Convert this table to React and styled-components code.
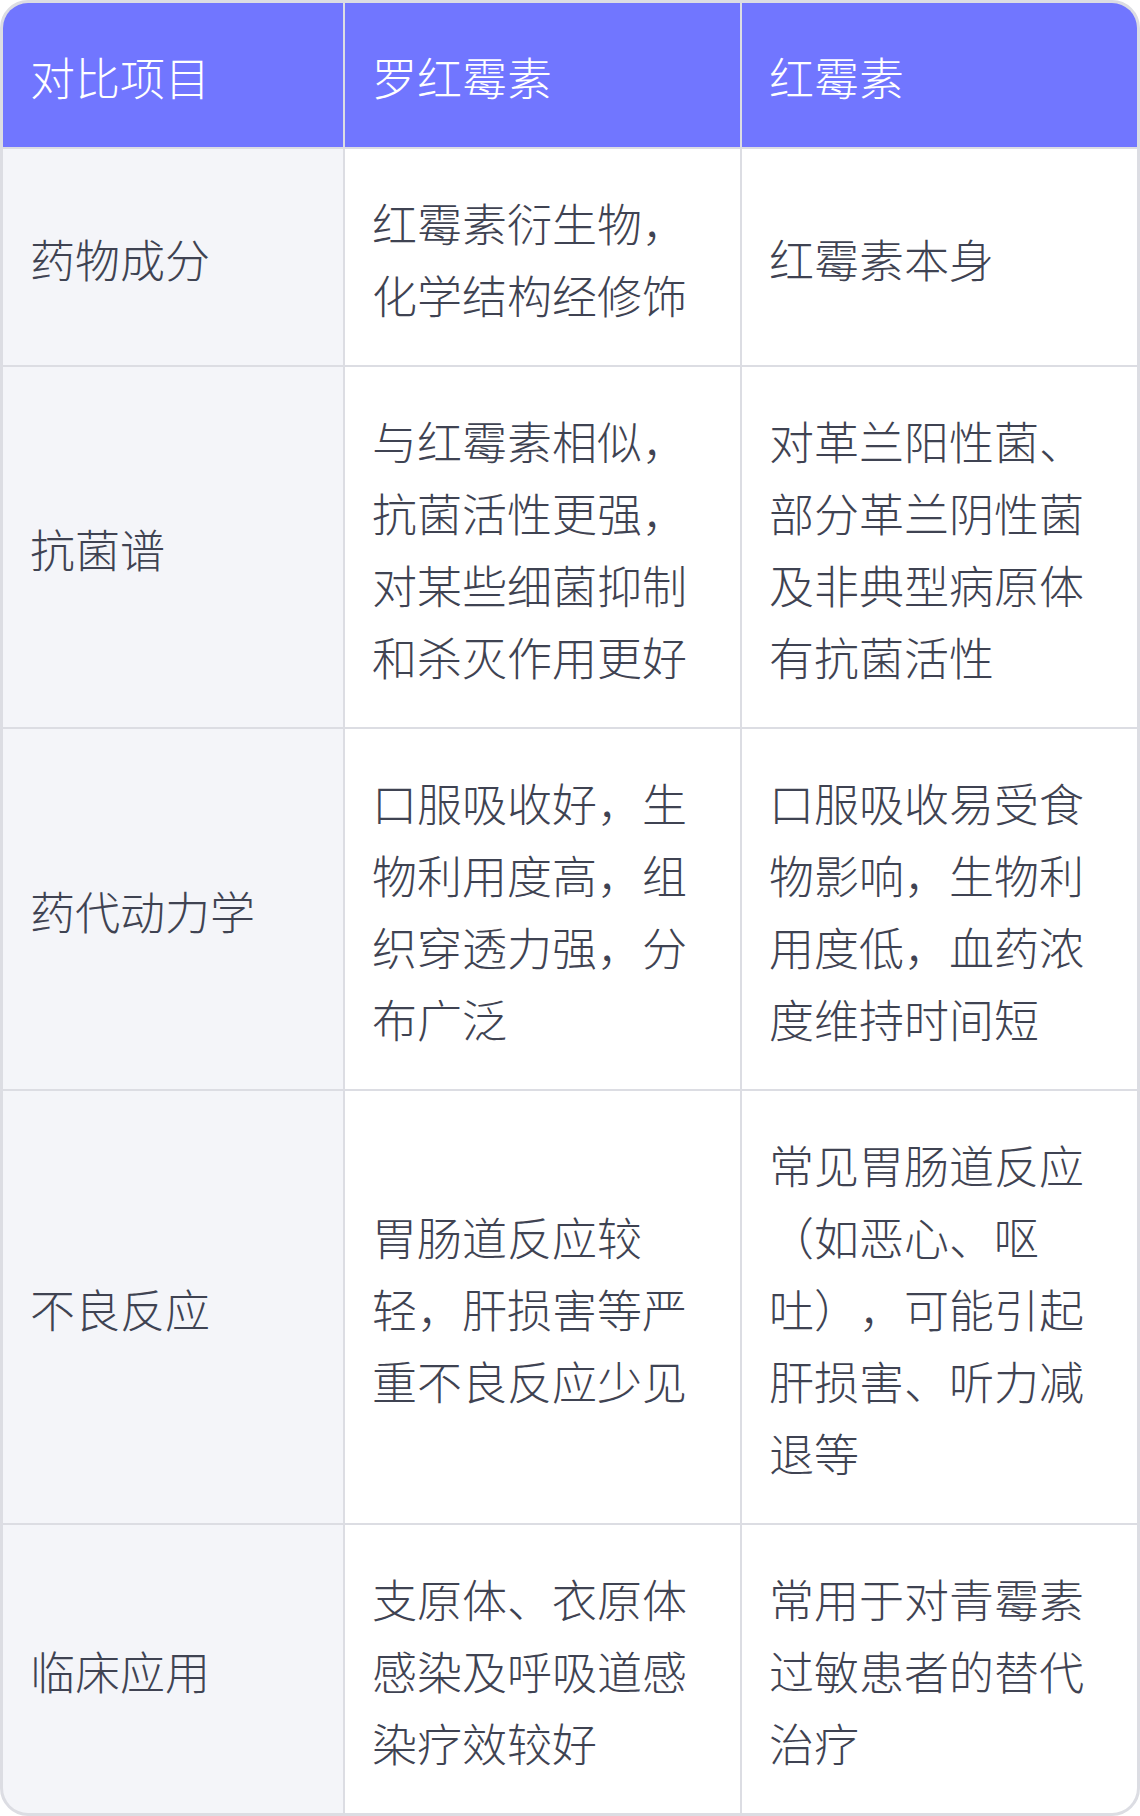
import React from 'react';
import styled, {createGlobalStyle} from "styled-components";

const GlobalStyle = createGlobalStyle`
    html, body {
        margin: 0;
        padding: 0;
        background: #ffffff;
    }
    body {
        font-family: "Noto Sans CJK SC", "Noto Sans", sans-serif;
    }
`;

const TableContainer = styled.div`
    width: 1140px;
    box-sizing: border-box;
    border: 3px solid #dcdde3;
    border-radius: 28px;
    overflow: hidden;
    display: grid;
    grid-template-columns: 340px 1fr 1fr;
    gap: 2px;
    background: #dcdde3;
`;

const Cell = styled.div`
    display: flex;
    align-items: center;
    padding: 38px 27px 34px;
    background: ${props => props.$head ? '#7176ff' : props.$label ? '#f4f5f9' : '#ffffff'};
    color: ${props => props.$head ? '#ffffff' : '#3f4352'};
    font-size: 45px;
    line-height: 72px;
    font-weight: 300;
    text-spacing-trim: space-all;
`;

const headers = ['对比项目', '罗红霉素', '红霉素'];

const rows = [
    ['药物成分', '红霉素衍生物，化学结构经修饰', '红霉素本身'],
    ['抗菌谱', '与红霉素相似，抗菌活性更强，对某些细菌抑制和杀灭作用更好', '对革兰阳性菌、部分革兰阴性菌及非典型病原体有抗菌活性'],
    ['药代动力学', '口服吸收好，生物利用度高，组织穿透力强，分布广泛', '口服吸收易受食物影响，生物利用度低，血药浓度维持时间短'],
    ['不良反应', '胃肠道反应较轻，肝损害等严重不良反应少见', '常见胃肠道反应（如恶心、呕吐），可能引起肝损害、听力减退等'],
    ['临床应用', '支原体、衣原体感染及呼吸道感染疗效较好', '常用于对青霉素过敏患者的替代治疗'],
];

export default function App() {
    return (
        <>
            <GlobalStyle/>
            <TableContainer>
                {headers.map(h => <Cell key={h} $head>{h}</Cell>)}
                {rows.map(row => (
                    <React.Fragment key={row[0]}>
                        <Cell $label>{row[0]}</Cell>
                        <Cell>{row[1]}</Cell>
                        <Cell>{row[2]}</Cell>
                    </React.Fragment>
                ))}
            </TableContainer>
        </>
    );
}
